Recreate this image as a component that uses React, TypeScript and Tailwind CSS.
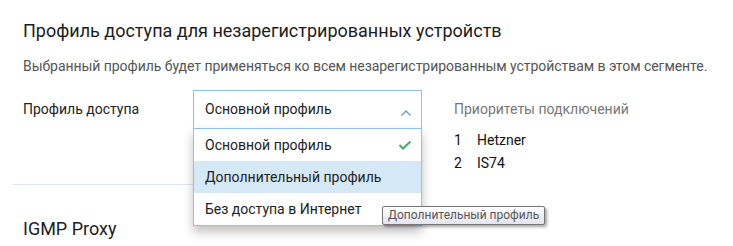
import React from "react";

const options = ["Основной профиль", "Дополнительный профиль", "Без доступа в Интернет"];

export default function App() {
  return (
    <div className="w-[733px] h-[246px] overflow-hidden bg-white font-['Roboto',sans-serif] text-[#1a1a1a]">
      <div className="px-[23px] pt-[19px]">
        <h2 className="text-[18px] leading-[24px] text-[#1c1c1c]">
          Профиль доступа для незарегистрированных устройств
        </h2>
        <p className="mt-[14px] whitespace-nowrap text-[14px] leading-[18px] tracking-[-0.05px] text-[#555]">
          Выбранный профиль будет применяться ко всем незарегистрированным устройствам в этом сегменте.
        </p>

        <div className="mt-[15px] flex h-[94px]">
          {/* Профиль */}
          <div className="w-[170px] pt-[10px] text-[14px] leading-[18px] text-[#222]">
            Профиль доступа
          </div>
          <div className="relative w-[229px]">
            <div className="flex h-[39px] items-center justify-between border border-[#8cc3ea] bg-white pl-[11px] pr-[9px] text-[14px] text-[#222]">
              <span>Основной профиль</span>
              <svg width="12" height="8" viewBox="0 0 12 8" className="mt-[6px]">
                <path d="M1.5 6.5 L6 2 L10.5 6.5" fill="none" stroke="#6a9cc4" strokeWidth="1.4" />
              </svg>
            </div>
            {/* Меню */}
            <ul className="absolute left-0 top-[38px] z-10 w-[229px] border border-[#8cc3ea] bg-white text-[14px] text-[#222] shadow-[0_6px_10px_rgba(0,0,0,0.25)]">
              {options.map((o, i) => (
                <li
                  key={o}
                  className={
                    i === 1
                      ? "flex h-[32px] items-center justify-between bg-[#d5e8f5] pl-[11px] pr-[9px]"
                      : "flex h-[32px] items-center justify-between pl-[11px] pr-[9px]"
                  }
                >
                  <span>{o}</span>
                  {i === 0 && (
                    <svg width="14" height="10" viewBox="0 0 14 10">
                      <path d="M1.5 5 L5 8.5 L12.5 1.5" fill="none" stroke="#3fae6a" strokeWidth="2" />
                    </svg>
                  )}
                </li>
              ))}
            </ul>
            {/* Tooltip */}
            <div className="absolute left-[189px] top-[116px] z-20 whitespace-nowrap rounded-[2px] border border-[#767676] bg-gradient-to-b from-white to-[#e4e5f0] px-[5px] text-[12px] leading-[17px] text-[#575757] shadow-[2px_2px_3px_rgba(0,0,0,0.35)]">
              Дополнительный профиль
            </div>
          </div>

          {/* Приоритеты */}
          <div className="ml-[32px] pt-[8px] text-[14px] leading-[23px]">
            <div className="text-[#777]">Приоритеты подключений</div>
            <div className="mt-[8px] flex text-[#111]">
              <span className="w-[23px]">1</span>
              <span>Hetzner</span>
            </div>
            <div className="flex text-[#111]">
              <span className="w-[23px]">2</span>
              <span>IS74</span>
            </div>
          </div>
        </div>
      </div>

      <div className="ml-[13px] h-px w-[300px] bg-[#d9e7f0]" />

      <div className="px-[23px] pt-[32px] text-[18px] leading-[24px] text-[#1c1c1c]">IGMP Proxy</div>
    </div>
  );
}
